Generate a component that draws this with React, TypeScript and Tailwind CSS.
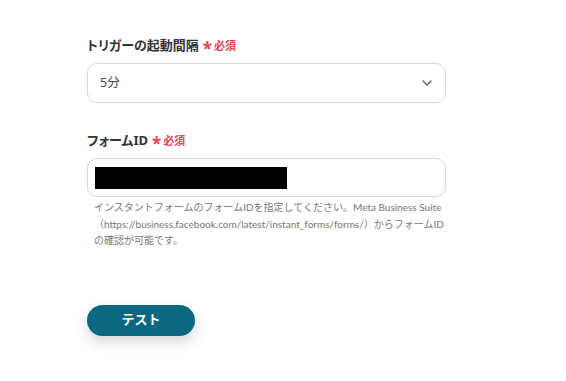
import React from 'react'
import { ChevronDown } from 'lucide-react'

const font = { fontFamily: '"Noto Sans", "Noto Sans CJK JP", sans-serif' }
const helpFont = { fontFamily: 'Lato, "Noto Sans CJK JP", sans-serif' }

const Label: React.FC<{ text: string }> = ({ text }) => (
  <div className="flex items-center h-5 text-[13px] font-bold text-[#333333] [font-feature-settings:'palt']">
    <span>{text}</span>
    <span className="ml-[4px] text-[17px] leading-none text-[#e8445a] mt-[5px]">*</span>
    <span className="ml-[2px] text-[11px] text-[#e8445a]">必須</span>
  </div>
)

export default function App() {
  return (
    <div className="w-[566px] h-[381px] bg-white pl-[87px] pt-[36px]" style={font}>
      <div className="w-[359px]">
        <Label text="トリガーの起動間隔" />
        <div className="mt-[7px] h-[40px] border border-[#d5d8de] rounded-[10px] flex items-center justify-between pl-[12px] pr-[10px] text-[12.5px] text-[#444]">
          <span>5分</span>
          <ChevronDown size={16} strokeWidth={2.2} className="text-[#666]" />
        </div>

        <div className="mt-[28px]">
          <Label text="フォームID" />
        </div>
        <div className="mt-[7px] h-[39px] border border-[#d5d8de] rounded-[10px] flex items-center pl-[7px]">
          <div className="w-[192px] h-[22px] bg-black" />
        </div>
        <p className="mt-[2px] pl-[7px] text-[10px] leading-[16.5px] text-[#777] whitespace-nowrap" style={helpFont}>
          インスタントフォームのフォームIDを指定してください。Meta Business Suite
          <br />
          （https://business.facebook.com/latest/instant_forms/forms/）からフォームID
          <br />
          の確認が可能です。
        </p>
      </div>

      <button className="mt-[56px] w-[108px] h-[31px] rounded-full bg-[#0b6880] text-white text-[13px] font-bold shadow-[0_6px_14px_rgba(0,40,60,0.18)]">
        テスト
      </button>
    </div>
  )
}
